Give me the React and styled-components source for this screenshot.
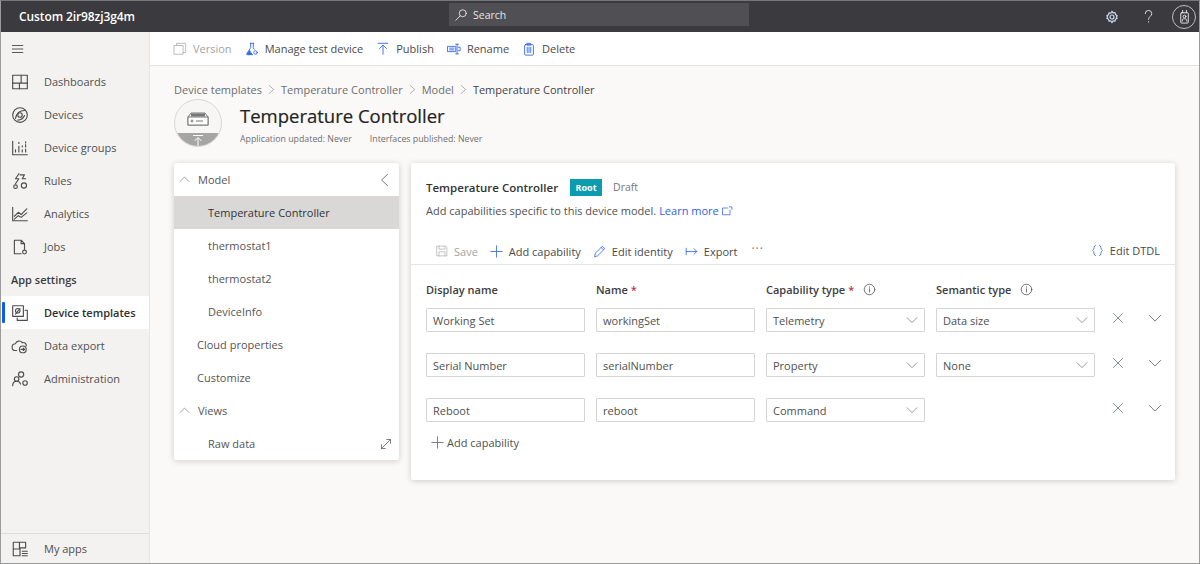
import React from "react";
import styled, { createGlobalStyle } from "styled-components";

const Global = createGlobalStyle`
  html, body { margin: 0; padding: 0; height: 100%; overflow: hidden; }
  * { box-sizing: border-box; }
  body { font-family: "Open Sans", "Noto Sans", "Liberation Sans", sans-serif; font-size: 11px; color: #444; }
`;

const Frame = styled.div`
  width: 1200px; height: 564px; display: flex; flex-direction: column;
  border: 1px solid #9b9b9b; border-top: 1px solid #77777a; background: #faf9f8; overflow: hidden;
`;
const TopBar = styled.header`
  height: 31px; flex: none; background: #3b3a3e; display: grid; grid-template-columns: 448px 300px 1fr; align-items: center;
`;
const Brand = styled.div`
  color: #fff; font-size: 12px; font-weight: 600; padding-left: 18px; letter-spacing: -0.1px;
`;
const Search = styled.div`
  height: 23px; background: #504f53; display: flex; align-items: center; gap: 5px; padding-left: 5px; color: #e6e6e6; font-size: 10.5px; margin-top: -4px;
`;
const TopActions = styled.div`
  display: flex; justify-content: flex-end; align-items: center; padding-right: 3px; color: #e8e8e8;
`;
const TopBtn = styled.span`
  width: 36px; display: flex; justify-content: center; align-items: center;
`;
const Avatar = styled.span`
  width: 24px; height: 24px; border-radius: 50%; border: 1px solid #bdbdbd; display: flex; align-items: center; justify-content: center; margin-left: 6px;
`;
const Body = styled.div`
  flex: 1; display: flex; min-height: 0;
`;
const Sidebar = styled.nav`
  width: 149px; flex: none; background: #f3f2f1; border-right: 1px solid #e6e5e3; display: flex; flex-direction: column; color: #555;
`;
const Burger = styled.div`
  height: 33px; flex: none; display: flex; align-items: center; padding-left: 10px;
`;
const NavItem = styled.div`
  height: 33px; flex: none; display: flex; align-items: center; position: relative; padding-left: 10px; gap: 15px; font-size: 11px;
  background: ${p => (p.$active ? "#fff" : "transparent")};
  color: ${p => (p.$active ? "#2f2f2f" : "#505050")};
  font-weight: ${p => (p.$active ? 600 : 400)};
  &::before {
    content: ""; display: ${p => (p.$active ? "block" : "none")}; position: absolute; left: 1px; top: 6px; bottom: 6px; width: 3px; background: #0f5cf0; border-radius: 1px;
  }
`;
const NavHeading = styled.div`
  height: 33px; flex: none; display: flex; align-items: center; padding-left: 10px; font-weight: 600; color: #3c3c3c;
`;
const NavFoot = styled.div`
  margin-top: auto; height: 30px; border-top: 1px solid #dddcda; display: flex; align-items: center; gap: 15px; padding-left: 10px; color: #505050;
`;
const Main = styled.main`
  flex: 1; min-width: 0; display: flex; flex-direction: column;
`;
const CommandBar = styled.div`
  height: 34px; flex: none; background: #fff; border-bottom: 1px solid #e3e2e0; display: flex; align-items: center; gap: 13px; padding-left: 23px;
`;
const Cmd = styled.span`
  display: inline-flex; align-items: center; gap: ${p => p.$gap || 6}px; white-space: nowrap; font-size: 11px;
  color: ${p => (p.$off ? "#a3a3a3" : "#4a4a4a")};
`;
const Content = styled.div`
  padding: 0 24px 0 24px; display: flex; flex-direction: column;
`;
const Crumbs = styled.div`
  height: 32px; flex: none; padding-top: 14px; line-height: 17px; display: flex; align-items: center; gap: 5px; color: #6d6d6d; font-size: 11px; white-space: nowrap;
`;
const CrumbNow = styled.span` color: #444; `;
const Header = styled.div`
  display: flex; gap: 18px; height: 64px; flex: none; margin-top: 1px;
`;
const Disc = styled.div`
  width: 48px; height: 48px; border-radius: 50%; border: 1px solid #d9d8d6; background: #f7f6f5; overflow: hidden; flex: none;
`;
const HeadText = styled.div`
  display: flex; flex-direction: column;
`;
const Title = styled.h1`
  margin: 4px 0 0; font-size: 18.5px; line-height: 26px; font-weight: 400; color: #242424; -webkit-text-stroke: 0.2px #242424; white-space: nowrap;
`;
const Meta = styled.div`
  display: flex; gap: 18px; font-size: 8.8px; color: #6f6f6f; margin-top: 4px; line-height: 13px;
`;
const Columns = styled.div`
  display: flex; align-items: flex-start; gap: 12px;
`;
const Tree = styled.aside`
  width: 225px; height: 297px; flex: none; background: #fff; border-radius: 2px; box-shadow: 0 1px 6px rgba(0,0,0,.18); padding-top: 0; display: flex; flex-direction: column;
`;
const TreeRow = styled.div`
  height: 33px; flex: none; display: flex; align-items: center; position: relative; color: #505050; font-size: 11px;
  padding-left: ${p => p.$indent}px; gap: 8px;
  background: ${p => (p.$selected ? "#d9d8d7" : "transparent")};
  color: ${p => (p.$selected ? "#333" : "#555")};
`;
const TreeEnd = styled.span`
  position: absolute; right: 7px; top: 50%; transform: translateY(-50%); display: flex;
`;
const Card = styled.section`
  width: 764px; height: 317px; flex: none; background: #fff; border-radius: 2px; box-shadow: 0 1px 6px rgba(0,0,0,.18); display: flex; flex-direction: column;
`;
const CardHead = styled.div`
  height: 102px; flex: none; border-bottom: 1px solid #e6e5e4; padding: 15px 15px 0; display: flex; flex-direction: column;
`;
const CardTitleRow = styled.div`
  display: flex; align-items: center; height: 18px;
`;
const CardTitle = styled.span`
  font-size: 11.5px; font-weight: 600; color: #333; white-space: nowrap;
`;
const Badge = styled.span`
  margin-left: 12px; width: 32px; height: 17px; background: #0c9cb0; color: #fff; font-size: 9px; font-weight: 700; display: flex; align-items: center; justify-content: center;
`;
const Draft = styled.span`
  margin-left: 11px; color: #767676; font-size: 10.5px;
`;
const Sub = styled.div`
  margin-top: 6px; height: 17px; line-height: 17px; font-size: 11px; color: #515151; white-space: nowrap; display: flex; align-items: center;
`;
const Lnk = styled.a`
  color: #2b63e6; margin-left: 3px; display: inline-flex; align-items: center; gap: 2px;
`;
const Tools = styled.div`
  display: flex; align-items: center; margin-top: 21px; height: 22px; gap: 12px; padding-left: 10px;
`;
const ToolsEnd = styled.span`
  margin-left: auto;
`;
const Dots = styled.span`
  color: #777; font-size: 12px; letter-spacing: 1px; line-height: 1; margin-left: 2px; margin-top: -5px;
`;
const Form = styled.div`
  padding: 12px 15px 0; display: flex; flex-direction: column; gap: 21px;
`;
const GridRow = styled.div`
  display: grid; grid-template-columns: 159px 159px 159px 159px 24px 28px; column-gap: 11px; align-items: center; height: 24px;
`;
const HeadRow = styled(GridRow)`
  margin-bottom: -14px;
`;
const Label = styled.label`
  font-size: 11px; font-weight: 600; color: #3e3e3e; display: flex; align-items: center; white-space: nowrap;
`;
const Star = styled.span` color: #c4314b; margin-left: 3px; `;
const InfoWrap = styled.span` margin-left: 9px; display: flex; `;
const Field = styled.div`
  height: 24px; border: 1px solid #d4d4d4; border-radius: 1px; padding: 0 6px; display: flex; align-items: center; justify-content: space-between; font-size: 11px; color: #505050; background: #fff;
`;
const IconBtn = styled.span`
  display: flex; justify-content: center; align-items: center; margin-top: -4px;
`;
const AddRow = styled.div`
  display: flex; align-items: center; gap: 3px; color: #505050; font-size: 11px; padding-left: 20px; margin-top: 11px; height: 18px;
`;

const I = ({ s = 14, c = "#555", w = 1, children }) => (
  <svg width={s} height={s} viewBox="0 0 16 16" fill="none" stroke={c} strokeWidth={w} strokeLinecap="round" strokeLinejoin="round" style={{ flex: "none" }}>{children}</svg>
);
const BLUE = "#2f66e6";
const Chevron = ({ dir = "down", s = 12, c = "#6a6a6a" }) => (
  <I s={s} c={c}>
    <path d={dir === "down" ? "M1.5 5l6.5 6.5L14.5 5" : dir === "up" ? "M1.5 11L8 4.5 14.5 11" : "M11 1.5L4 8l7 6.5"} />
  </I>
);
const Dropdown = () => <Chevron s={12} c="#777" />;
const Info = () => (
  <I s={13} c="#555"><circle cx="8" cy="8" r="6.5" /><path d="M8 7.2v4M8 4.6v.6" /></I>
);

const nav = {
  dash: <><rect x="1.5" y="2" width="13" height="12" /><path d="M1.5 9h13M7.5 9v5M9 2v7" /></>,
  dev: <><circle cx="8" cy="8" r="6.5" /><circle cx="8" cy="8" r="2" /><path d="M4 11c1-5 4-7 8-7M6 12.5c3 0 5-1.5 6-4" /></>,
  grp: <><path d="M1.5 2v12h13" /><path d="M4 11.5v-2M7 11.5v-5M10 11.5v-2M10 7V6M13 11.5V9M13 7V5M13 3.5V2.5M7 4V3" /></>,
  rules: <><path d="M7 1.5L4 6h3l-3 4.5M8 2.5h4L10 6h3" /><circle cx="4" cy="13" r="1.6" /><circle cx="11.5" cy="12" r="2.3" /></>,
  ana: <><path d="M1.5 2v12h13" /><path d="M3 10l3.5-3.5 2.5 2L14 3.5" /><path d="M3 12.5l3.5-3 2.5 1.5 5-4" /></>,
  jobs: <><path d="M3 14V2h6l3 3v5M3 14h6M9 2v3h3" /><circle cx="12" cy="12.5" r="1.7" /></>,
  tpl: <><rect x="1.5" y="1.5" width="9.5" height="9.5" /><path d="M12.5 5.5h2v9h-9v-2" /><circle cx="6" cy="6" r="2" /><path d="M4 9l4-5" /></>,
  exp: <><path d="M5 12H4a3 3 0 010-6c.5-2.500 4.500-3.500 6-1 2-.5 4 1 3.500 3" /><circle cx="10.500" cy="11" r="3" /><path d="M9 11h3M11 10l1 1-1 1" /></>,
  adm: <><circle cx="9" cy="4" r="2.300" /><circle cx="5" cy="8" r="2" /><path d="M1.500 14c0-3 1.500-4 3.500-4s3 .8 3.500 2.500" /><circle cx="12.500" cy="11.500" r="2" /></>,
  apps: <><path d="M2 2h11v5H8v7H2zM2 8h6M7.500 2v5" /><path d="M10 10h4.500M10 12h4.500M10 14h4.500" /></>,
};
const NavIcon = ({ k }) => <I s={18} c="#4c4c4c">{nav[k]}</I>;

const Row = ({ a, b, t, s }) => (
  <GridRow>
    <Field>{a}</Field>
    <Field>{b}</Field>
    <Field>{t}<Dropdown /></Field>
    {s ? <Field>{s}<Dropdown /></Field> : <span />}
    <IconBtn><I s={12} c="#5a6b78"><path d="M2 2l12 12M14 2L2 14" /></I></IconBtn>
    <IconBtn><Chevron s={14} /></IconBtn>
  </GridRow>
);

export default function App() {
  return (
    <Frame>
      <Global />
      <TopBar>
        <Brand>Custom 2ir98zj3g4m</Brand>
        <Search>
          <I s={14} c="#e8e8e8"><circle cx="10" cy="6" r="4" /><path d="M7 9l-5 5" /></I>
          Search
        </Search>
        <TopActions>
          <TopBtn>
            <I s={14} c="#cfe0f5" w={1.3}><circle cx="8" cy="8" r="2.300" /><path d="M8 1.500l1.300 1.800 2.200-.4.400 2.200L14 6.500 13 8l1 1.500-2.100 1-.4 2.200-2.200-.4L8 14.500l-1.300-2.200-2.200.4-.4-2.200L2 9.500 3 8 2 6.500l2.100-1 .4-2.200 2.200.4z" /></I>
          </TopBtn>
          <TopBtn>
            <I s={15} c="#e0e0e0"><path d="M4.500 5a3.500 3.500 0 117 0c0 2.500-3.500 3-3.500 6M8 13.500v.5" /></I>
          </TopBtn>
          <Avatar>
            <I s={15} c="#e8e8e8"><rect x="4" y="4" width="8" height="11" rx=".8" /><path d="M6 1.500v2.500M10 1.500v2.500" /><circle cx="8" cy="8" r="1.500" /><path d="M5.500 13c0-2 1-2.700 2.500-2.700s2.500.7 2.500 2.700" /></I>
          </Avatar>
        </TopActions>
      </TopBar>
      <Body>
        <Sidebar>
          <Burger>
            <I s={14} c="#444"><path d="M1.500 4h12M1.500 8h12M1.500 12h12" /></I>
          </Burger>
          <NavItem><NavIcon k="dash" />Dashboards</NavItem>
          <NavItem><NavIcon k="dev" />Devices</NavItem>
          <NavItem><NavIcon k="grp" />Device groups</NavItem>
          <NavItem><NavIcon k="rules" />Rules</NavItem>
          <NavItem><NavIcon k="ana" />Analytics</NavItem>
          <NavItem><NavIcon k="jobs" />Jobs</NavItem>
          <NavHeading>App settings</NavHeading>
          <NavItem $active><NavIcon k="tpl" />Device templates</NavItem>
          <NavItem><NavIcon k="exp" />Data export</NavItem>
          <NavItem><NavIcon k="adm" />Administration</NavItem>
          <NavFoot><NavIcon k="apps" />My apps</NavFoot>
        </Sidebar>
        <Main>
          <CommandBar>
            <Cmd $off>
              <I s={14} c="#b5b5b5"><rect x="1.500" y="4" width="10" height="10" /><path d="M4 4V1.500h10.500V12H11.500" /></I>
              Version
            </Cmd>
            <Cmd>
              <I s={14} c={BLUE}><path d="M6 1.500h4M6.500 1.500v5L2 13.500c-.3.6 0 1 .7 1h6" /><path d="M9.500 1.500v5l1 2" /><path d="M5 10l-2.500 4h5z" fill={BLUE} /><circle cx="12" cy="12" r="2" /></I>
              Manage test device
            </Cmd>
            <Cmd>
              <I s={14} c={BLUE}><path d="M2.500 1.500h11M8 14V4M4 7.500L8 3.500l4 4" /></I>
              Publish
            </Cmd>
            <Cmd>
              <I s={14} c={BLUE}><rect x="1" y="5" width="9" height="6" /><path d="M3 7h5M3 9h5M11.500 2.500v11M10 2.500h3M10 13.500h3M13 6h2v4h-2" /></I>
              Rename
            </Cmd>
            <Cmd>
              <I s={14} c={BLUE}><rect x="3" y="3" width="10" height="12" rx="1" /><path d="M6 1.500h4v2H6zM6 6v6M8 6v6M10 6v6" /></I>
              Delete
            </Cmd>
          </CommandBar>
          <Content>
            <Crumbs>
              <span>Device templates</span>
              <I s={9} c="#777"><path d="M4 1l8 7-8 7" /></I>
              <span>Temperature Controller</span>
              <I s={9} c="#777"><path d="M4 1l8 7-8 7" /></I>
              <span>Model</span>
              <I s={9} c="#777"><path d="M4 1l8 7-8 7" /></I>
              <CrumbNow>Temperature Controller</CrumbNow>
            </Crumbs>
            <Header>
              <Disc>
                <svg width="46" height="46" viewBox="0 0 46 46">
                  <rect x="0" y="33" width="46" height="13" fill="#a5a5a3" />
                  <path d="M13 17l3-4h14l3 4v8H13z" fill="none" stroke="#777" strokeWidth="1" />
                  <rect x="13" y="17" width="20" height="8" fill="#fff" stroke="#777" />
                  <rect x="16" y="13.500" width="14" height="3" fill="#777" />
                  <circle cx="17" cy="21" r="1" fill="none" stroke="#777" />
                  <path d="M21 21h7" stroke="#777" />
                  <path d="M18 35.500h10M23 46v-8M19.500 41l3.500-3.500 3.500 3.500" stroke="#fff" fill="none" />
                </svg>
              </Disc>
              <HeadText>
                <Title>Temperature Controller</Title>
                <Meta>
                  <span>Application updated: Never</span>
                  <span>Interfaces published: Never</span>
                </Meta>
              </HeadText>
            </Header>
            <Columns>
              <Tree>
                <TreeRow $indent={5}>
                  <Chevron dir="up" s={11} c="#777" />Model
                  <TreeEnd><Chevron dir="left" s={14} c="#666" /></TreeEnd>
                </TreeRow>
                <TreeRow $indent={34} $selected>Temperature Controller</TreeRow>
                <TreeRow $indent={34}>thermostat1</TreeRow>
                <TreeRow $indent={34}>thermostat2</TreeRow>
                <TreeRow $indent={34}>DeviceInfo</TreeRow>
                <TreeRow $indent={23}>Cloud properties</TreeRow>
                <TreeRow $indent={23}>Customize</TreeRow>
                <TreeRow $indent={5}><Chevron dir="up" s={11} c="#777" />Views</TreeRow>
                <TreeRow $indent={34}>
                  Raw data
                  <TreeEnd>
                    <I s={12} c="#555"><path d="M2 14L14 2M9 2h5v5M2 9v5h5" /></I>
                  </TreeEnd>
                </TreeRow>
              </Tree>
              <Card>
                <CardHead>
                  <CardTitleRow>
                    <CardTitle>Temperature Controller</CardTitle>
                    <Badge>Root</Badge>
                    <Draft>Draft</Draft>
                  </CardTitleRow>
                  <Sub>
                    Add capabilities specific to this device model.
                    <Lnk>Learn more
                      <I s={12} c={BLUE}><path d="M12 7v6H2V4h7M11 2.500h3.500V6" /></I>
                    </Lnk>
                  </Sub>
                  <Tools>
                    <Cmd $off>
                      <I s={12} c="#b0b0b0"><path d="M1.500 1.500h11l2 2v11h-13zM4 1.500v4h8v-4M4 14.500V9h8v5.500" /></I>
                      Save
                    </Cmd>
                    <Cmd>
                      <I s={13} c={BLUE}><path d="M8 1v14M1 8h14" /></I>
                      Add capability
                    </Cmd>
                    <Cmd>
                      <I s={13} c={BLUE}><path d="M2 14l1-4 8.500-8.500 3 3L6 13z" /><path d="M10 3l3 3" /></I>
                      Edit identity
                    </Cmd>
                    <Cmd>
                      <I s={13} c={BLUE}><path d="M1.500 4v8M1.500 8h13M11 4.500L14.500 8 11 11.500" /></I>
                      Export
                    </Cmd>
                    <Dots>···</Dots>
                    <ToolsEnd>
                      <Cmd>
                        <I s={13} c={BLUE}><path d="M5.500 1.500C3 1.500 4.500 7 2 8c2.500 1 1 6.500 3.500 6.500M10.500 1.500C13 1.500 11.500 7 14 8c-2.500 1-1 6.500-3.500 6.500" /></I>
                        Edit DTDL
                      </Cmd>
                    </ToolsEnd>
                  </Tools>
                </CardHead>
                <Form>
                  <HeadRow>
                    <Label>Display name</Label>
                    <Label>Name<Star>*</Star></Label>
                    <Label>Capability type<Star>*</Star><InfoWrap><Info /></InfoWrap></Label>
                    <Label>Semantic type<InfoWrap><Info /></InfoWrap></Label>
                  </HeadRow>
                  <Row a="Working Set" b="workingSet" t="Telemetry" s="Data size" />
                  <Row a="Serial Number" b="serialNumber" t="Property" s="None" />
                  <Row a="Reboot" b="reboot" t="Command" />
                </Form>
                <AddRow>
                  <I s={13} c="#666"><path d="M8 1v14M1 8h14" /></I>
                  Add capability
                </AddRow>
              </Card>
            </Columns>
          </Content>
        </Main>
      </Body>
    </Frame>
  );
}
